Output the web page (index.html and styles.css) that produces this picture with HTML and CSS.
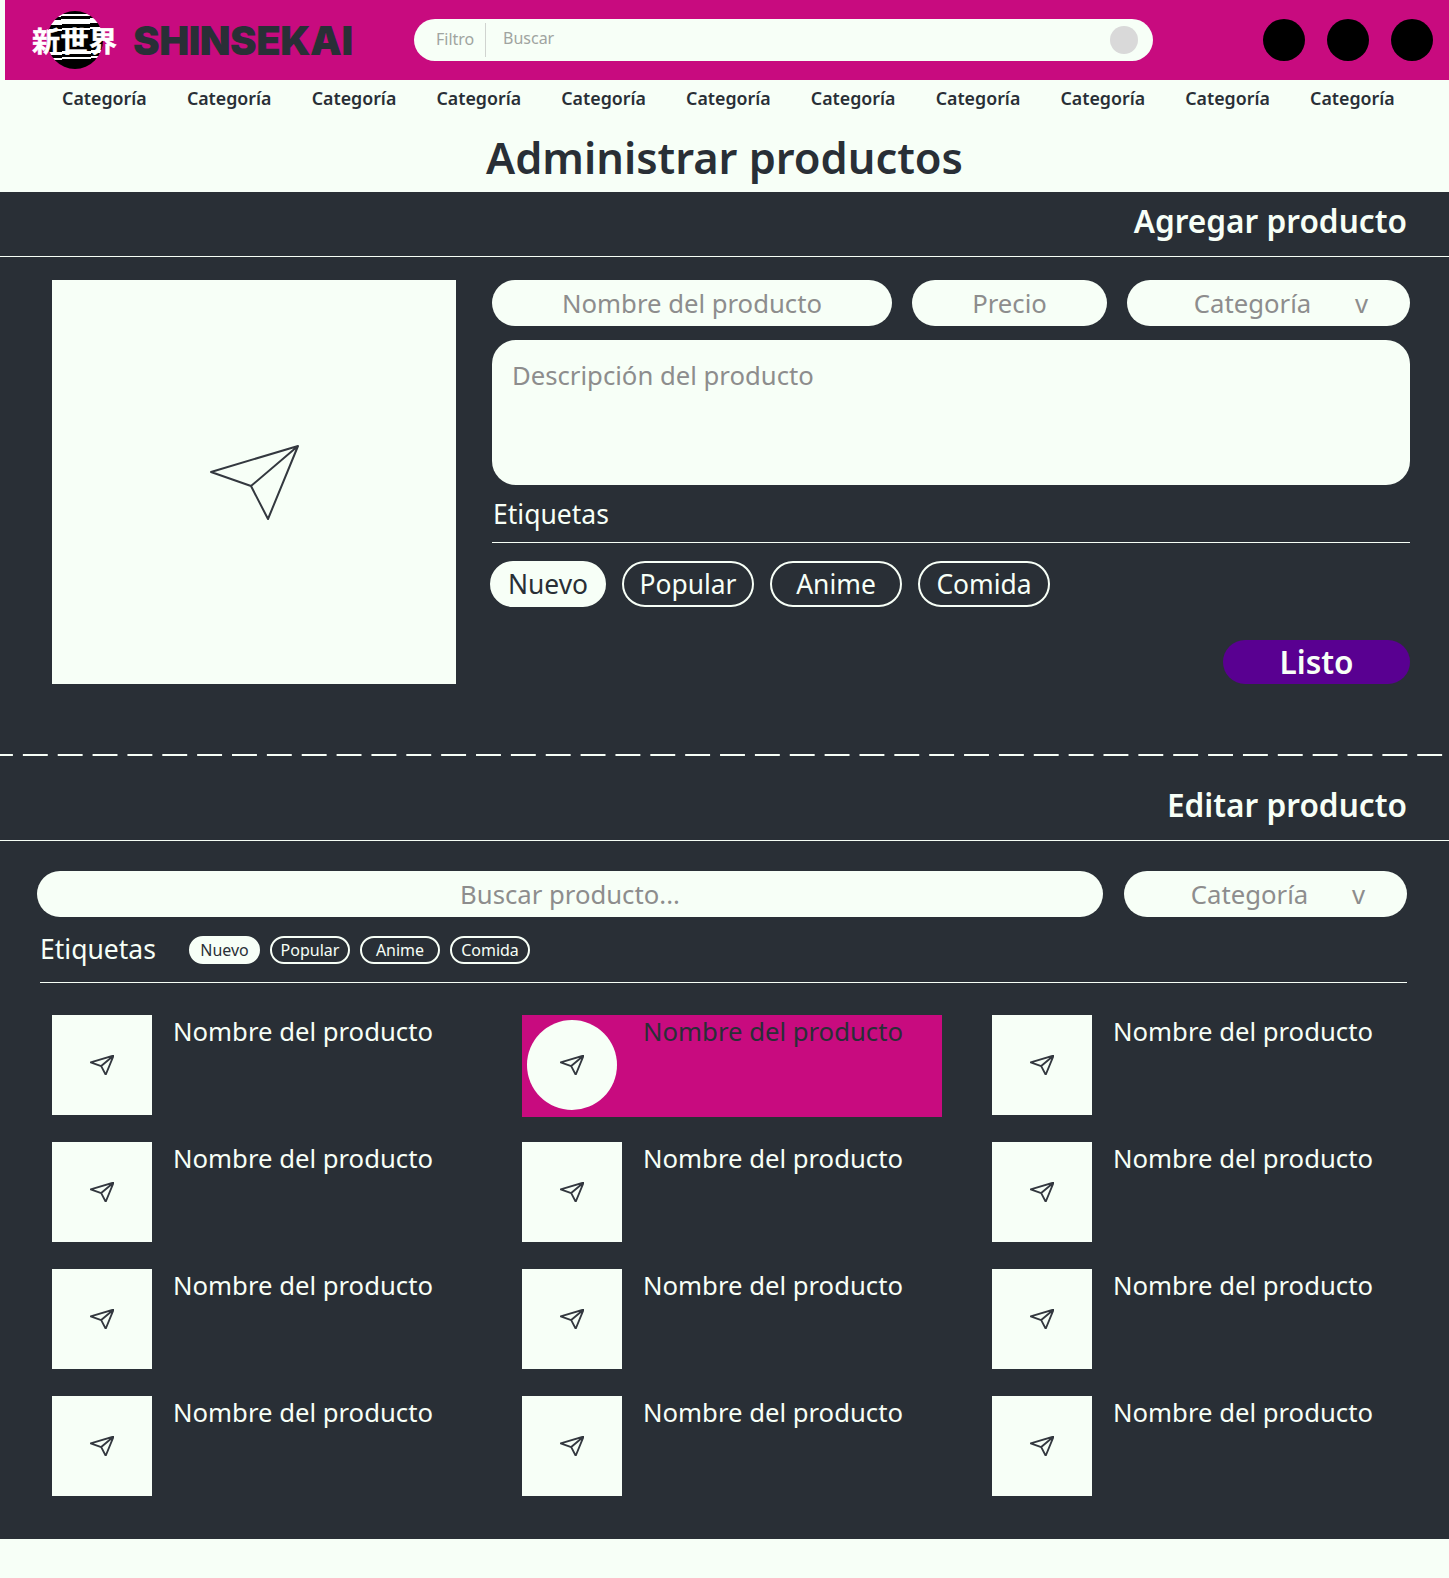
FILE: index.html
```html
<!DOCTYPE html>
<html lang="es">
<head>
    <meta charset="UTF-8">
    <meta name="viewport" content="width=device-width, initial-scale=1.0">
    <title>Administrar productos</title>
    <link rel="stylesheet" href="styles.css">
</head>
<body>
<svg class="sprite" width="0" height="0">
    <symbol id="plane" viewBox="0 0 90 76">
        <path d="M2 28 L89 2 L59 75 L42 42 Z M42 42 L89 2" fill="none" stroke="#33383f" stroke-linejoin="round"/>
    </symbol>
</svg>

<header class="topbar">
    <div class="logo">
        <div class="logo-circle"></div>
        <span class="logo-kanji">新世界</span>
    </div>
    <span class="brand">SHINSEKAI</span>
    <div class="searchbar">
        <span class="search-filter">Filtro</span>
        <span class="search-text">Buscar</span>
        <span class="search-btn"></span>
    </div>
    <div class="top-icons">
        <span class="dot"></span>
        <span class="dot"></span>
        <span class="dot"></span>
    </div>
</header>

<nav class="cats">
    <a>Categoría</a><a>Categoría</a><a>Categoría</a><a>Categoría</a><a>Categoría</a><a>Categoría</a><a>Categoría</a><a>Categoría</a><a>Categoría</a><a>Categoría</a><a>Categoría</a>
</nav>

<h1 class="title">Administrar productos</h1>

<main class="panel">
    <h2 class="panel-head">Agregar producto</h2>
    <section class="add-body">
        <div class="upload">
            <svg class="plane-big"><use href="#plane"/></svg>
        </div>
        <div class="add-form">
            <div class="field-row">
                <div class="field field-name">Nombre del producto</div>
                <div class="field field-price">Precio</div>
                <div class="field field-select"><span>Categoría</span><span class="caret">v</span></div>
            </div>
            <div class="desc">Descripción del producto</div>
            <div class="tags-label">Etiquetas</div>
            <div class="tags">
                <span class="tag tag-on tag-nuevo">Nuevo</span>
                <span class="tag tag-popular">Popular</span>
                <span class="tag">Anime</span>
                <span class="tag">Comida</span>
            </div>
            <button class="done">Listo</button>
        </div>
    </section>

    <div class="dashes"></div>

    <h2 class="panel-head panel-head-edit">Editar producto</h2>
    <section class="edit-body">
        <div class="filter-row">
            <div class="field field-search">Buscar producto...</div>
            <div class="field field-select"><span>Categoría</span><span class="caret">v</span></div>
        </div>
        <div class="filter-tags">
            <span class="filter-label">Etiquetas</span>
            <span class="mini mini-on">Nuevo</span>
            <span class="mini">Popular</span>
            <span class="mini">Anime</span>
            <span class="mini">Comida</span>
        </div>
        <div class="products">
            <div class="product"><div class="thumb"><svg class="plane-small"><use href="#plane"/></svg></div><span>Nombre del producto</span></div>
            <div class="product product-active"><div class="thumb"><svg class="plane-small"><use href="#plane"/></svg></div><span>Nombre del producto</span></div>
            <div class="product"><div class="thumb"><svg class="plane-small"><use href="#plane"/></svg></div><span>Nombre del producto</span></div>
            <div class="product"><div class="thumb"><svg class="plane-small"><use href="#plane"/></svg></div><span>Nombre del producto</span></div>
            <div class="product"><div class="thumb"><svg class="plane-small"><use href="#plane"/></svg></div><span>Nombre del producto</span></div>
            <div class="product"><div class="thumb"><svg class="plane-small"><use href="#plane"/></svg></div><span>Nombre del producto</span></div>
            <div class="product"><div class="thumb"><svg class="plane-small"><use href="#plane"/></svg></div><span>Nombre del producto</span></div>
            <div class="product"><div class="thumb"><svg class="plane-small"><use href="#plane"/></svg></div><span>Nombre del producto</span></div>
            <div class="product"><div class="thumb"><svg class="plane-small"><use href="#plane"/></svg></div><span>Nombre del producto</span></div>
            <div class="product"><div class="thumb"><svg class="plane-small"><use href="#plane"/></svg></div><span>Nombre del producto</span></div>
            <div class="product"><div class="thumb"><svg class="plane-small"><use href="#plane"/></svg></div><span>Nombre del producto</span></div>
            <div class="product"><div class="thumb"><svg class="plane-small"><use href="#plane"/></svg></div><span>Nombre del producto</span></div>
        </div>
    </section>
</main>
</body>
</html>
```

FILE: styles.css
```css
* {
    box-sizing: border-box;
}

body {
    margin: 0;
    background-color: #f7fff7;
    color: #292f36;
    font-family: "Noto Sans", "Lato", sans-serif;
}

.sprite {
    position: absolute;
}

/* top bar */
.topbar {
    display: flex;
    align-items: center;
    height: 80px;
    margin-left: 5px;
    background-color: #c80b7f;
}

.logo {
    position: relative;
    width: 85px;
    height: 58px;
    margin-left: 27px;
}

.logo-circle {
    width: 56px;
    height: 58px;
    margin-left: 15px;
    border-radius: 50%;
    background: linear-gradient(178deg,
        #000 0 4px, #fff 4px 6px, #000 6px 9px, #fff 9px 14px, #000 14px 18px,
        #fff 18px 20px, #000 20px 41px, #fff 41px 44px, #000 44px 47px,
        #fff 47px 49px, #000 49px);
}

.logo-kanji {
    position: absolute;
    left: 0;
    top: 9px;
    color: #fff;
    font-family: "Noto Sans CJK JP", sans-serif;
    font-size: 28px;
    font-weight: 700;
    line-height: 40px;
    letter-spacing: 0.5px;
    white-space: nowrap;
    -webkit-text-stroke: 0.5px #fff;
}

.brand {
    margin-left: 16px;
    width: 281px;
    font-family: "Inter", sans-serif;
    font-size: 40px;
    font-weight: 900;
    letter-spacing: -0.5px;
}

.searchbar {
    display: flex;
    align-items: center;
    width: 739px;
    height: 42px;
    border-radius: 21px;
    background-color: #f7fff7;
    color: #a0a4a0;
    font-size: 16px;
}

.search-filter {
    width: 72px;
    padding: 5px 0 7px 22px;
    border-right: 1px solid #d0d4d0;
}

.search-text {
    flex: 1;
    padding: 0 0 4px 17px;
}

.search-btn {
    width: 28px;
    height: 28px;
    margin-right: 15px;
    border-radius: 50%;
    background-color: #d9d9d9;
}

.top-icons {
    display: flex;
    gap: 22px;
    margin-left: 110px;
}

.dot {
    width: 42px;
    height: 42px;
    border-radius: 50%;
    background-color: #000;
}

/* categories */
.cats {
    display: grid;
    grid-template-columns: repeat(11, 124.8px);
    height: 36px;
    padding: 0 0 1px 42px;
    align-items: center;
    font-size: 17.8px;
    font-weight: 600;
    text-align: center;
}

.title {
    height: 76px;
    margin: 0;
    font-size: 43.4px;
    font-weight: 600;
    line-height: 84px;
    text-align: center;
}

/* dark panel */
.panel {
    height: 1347px;
    background-color: #292f36;
    color: #f7fff7;
}

.panel-head {
    height: 65px;
    margin: 0;
    padding-right: 42px;
    border-bottom: 1px solid #f7fff7;
    font-size: 31.6px;
    font-weight: 600;
    line-height: 57px;
    text-align: right;
}

.panel-head-edit {
    height: 85px;
    line-height: 98px;
}

.add-body {
    display: flex;
    gap: 36px;
    padding: 23px 39px 0 52px;
}

.upload {
    display: flex;
    align-items: center;
    justify-content: center;
    width: 404px;
    height: 404px;
    background-color: #f7fff7;
}

.plane-big {
    width: 90px;
    height: 76px;
    stroke-width: 2;
}

.add-form {
    display: flex;
    flex: 1;
    flex-direction: column;
}

.field-row {
    display: flex;
    gap: 20px;
}

.field {
    display: flex;
    align-items: center;
    justify-content: center;
    height: 46px;
    border-radius: 23px;
    background-color: #f7fff7;
    color: #8d8d8d;
    font-size: 25.7px;
}

.field-name {
    width: 400px;
}

.field-price {
    width: 195px;
}

.field-select {
    position: relative;
    width: 283px;
    padding-right: 32px;
}

.caret {
    position: absolute;
    right: 42px;
}

.desc {
    height: 145px;
    margin-top: 14px;
    padding: 20px;
    border-radius: 24px;
    background-color: #f7fff7;
    color: #8d8d8d;
    font-size: 25.7px;
    line-height: 32px;
}

.tags-label {
    height: 58px;
    padding: 12px 0 0 1px;
    border-bottom: 1px solid #f7fff7;
    font-size: 26.5px;
    line-height: 34px;
}

.tags {
    display: flex;
    gap: 16px;
    margin: 18px 0 0 -2px;
}

.tag {
    display: flex;
    align-items: center;
    justify-content: center;
    width: 132px;
    height: 46px;
    border: 2px solid #f7fff7;
    border-radius: 23px;
    font-size: 26.4px;
}

.tag-nuevo {
    width: 116px;
}

.tag-on {
    background-color: #f7fff7;
    color: #292f36;
}

.done {
    width: 187px;
    height: 44px;
    margin-top: auto;
    margin-left: auto;
    padding: 0 0 2px;
    border: none;
    border-radius: 22px;
    background-color: #590091;
    color: #f7fff7;
    font-family: inherit;
    font-size: 31.6px;
    font-weight: 600;
}

.dashes {
    height: 2px;
    margin-top: 70px;
    background: linear-gradient(90deg, #f7fff7 25px, transparent 25px) -12px 0 / 34.86px 2px repeat-x;
}

.edit-body {
    padding: 30px 42px 0 37px;
}

.filter-row {
    display: flex;
    gap: 21px;
}

.field-search {
    flex: 1;
}

.filter-tags {
    display: flex;
    align-items: center;
    gap: 10px;
    height: 66px;
    margin-left: 3px;
    border-bottom: 1px solid #f7fff7;
}

.filter-label {
    width: 139px;
    padding-bottom: 2px;
    font-size: 26.5px;
}

.mini {
    display: flex;
    align-items: center;
    justify-content: center;
    width: 80px;
    height: 28px;
    border: 2px solid #f7fff7;
    border-radius: 14px;
    font-size: 16px;
}

.mini-on {
    width: 71px;
    background-color: #f7fff7;
    color: #292f36;
}

.products {
    display: grid;
    grid-template-columns: repeat(3, 420px);
    grid-auto-rows: 100px;
    column-gap: 50px;
    row-gap: 27px;
    margin: 32px 0 0 15px;
}

.product {
    display: flex;
    gap: 21px;
    font-size: 25.7px;
    line-height: 34px;
}

.thumb {
    display: flex;
    flex-shrink: 0;
    align-items: center;
    justify-content: center;
    width: 100px;
    height: 100px;
    background-color: #f7fff7;
}

.plane-small {
    width: 24px;
    height: 20px;
    stroke-width: 7;
}

/* the selected product */
.product-active {
    height: 102px;
    padding: 0 0 0 5px;
    background-color: #c80b7f;
    color: #292f36;
}

.product-active .thumb {
    width: 90px;
    height: 90px;
    margin-top: 5px;
    border-radius: 50%;
}

.product-active span {
    margin-left: 5px;
}
```
